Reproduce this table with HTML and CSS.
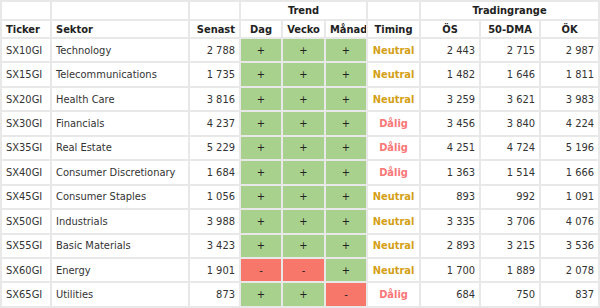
FILE: index.html
```html
<!DOCTYPE html>
<html>
<head>
<meta charset="utf-8">
<link rel="stylesheet" href="styles.css">
</head>
<body>
<table class="grid">
<colgroup>
<col class="c-ticker"><col class="c-sektor"><col class="c-senast"><col class="c-dag"><col class="c-vecko"><col class="c-manad"><col class="c-timing"><col class="c-os"><col class="c-dma"><col class="c-ok">
</colgroup>
<thead>
<tr class="h1"><th></th><th></th><th></th><th colspan="3" class="ctr">Trend</th><th></th><th colspan="3" class="ctr">Tradingrange</th></tr>
<tr class="h2"><th class="left">Ticker</th><th class="left">Sektor</th><th class="right">Senast</th><th class="ctr">Dag</th><th class="ctr">Vecko</th><th class="ctr">Månad</th><th class="ctr">Timing</th><th class="ctr">ÖS</th><th class="ctr">50-DMA</th><th class="ctr">ÖK</th></tr>
</thead>
<tbody>
<tr><td>SX10GI</td><td>Technology</td><td class="num">2 788</td><td class="up">+</td><td class="up">+</td><td class="up">+</td><td class="neutral">Neutral</td><td class="num">2 443</td><td class="num">2 715</td><td class="num">2 987</td></tr>
<tr><td>SX15GI</td><td>Telecommunications</td><td class="num">1 735</td><td class="up">+</td><td class="up">+</td><td class="up">+</td><td class="neutral">Neutral</td><td class="num">1 482</td><td class="num">1 646</td><td class="num">1 811</td></tr>
<tr><td>SX20GI</td><td>Health Care</td><td class="num">3 816</td><td class="up">+</td><td class="up">+</td><td class="up">+</td><td class="neutral">Neutral</td><td class="num">3 259</td><td class="num">3 621</td><td class="num">3 983</td></tr>
<tr><td>SX30GI</td><td>Financials</td><td class="num">4 237</td><td class="up">+</td><td class="up">+</td><td class="up">+</td><td class="bad">Dålig</td><td class="num">3 456</td><td class="num">3 840</td><td class="num">4 224</td></tr>
<tr><td>SX35GI</td><td>Real Estate</td><td class="num">5 229</td><td class="up">+</td><td class="up">+</td><td class="up">+</td><td class="bad">Dålig</td><td class="num">4 251</td><td class="num">4 724</td><td class="num">5 196</td></tr>
<tr><td>SX40GI</td><td>Consumer Discretionary</td><td class="num">1 684</td><td class="up">+</td><td class="up">+</td><td class="up">+</td><td class="bad">Dålig</td><td class="num">1 363</td><td class="num">1 514</td><td class="num">1 666</td></tr>
<tr><td>SX45GI</td><td>Consumer Staples</td><td class="num">1 056</td><td class="up">+</td><td class="up">+</td><td class="up">+</td><td class="neutral">Neutral</td><td class="num">893</td><td class="num">992</td><td class="num">1 091</td></tr>
<tr><td>SX50GI</td><td>Industrials</td><td class="num">3 988</td><td class="up">+</td><td class="up">+</td><td class="up">+</td><td class="neutral">Neutral</td><td class="num">3 335</td><td class="num">3 706</td><td class="num">4 076</td></tr>
<tr><td>SX55GI</td><td>Basic Materials</td><td class="num">3 423</td><td class="up">+</td><td class="up">+</td><td class="up">+</td><td class="neutral">Neutral</td><td class="num">2 893</td><td class="num">3 215</td><td class="num">3 536</td></tr>
<tr><td>SX60GI</td><td>Energy</td><td class="num">1 901</td><td class="down">-</td><td class="down">-</td><td class="up">+</td><td class="neutral">Neutral</td><td class="num">1 700</td><td class="num">1 889</td><td class="num">2 078</td></tr>
<tr><td>SX65GI</td><td>Utilities</td><td class="num">873</td><td class="up">+</td><td class="up">+</td><td class="down">-</td><td class="bad">Dålig</td><td class="num">684</td><td class="num">750</td><td class="num">837</td></tr>
</tbody>
</table>
</body>
</html>
```

FILE: styles.css
```css
html, body {
  margin: 0;
  padding: 0;
  background: #ffffff;
}
.grid {
  border-collapse: collapse;
  table-layout: fixed;
  width: 599px;
  font-family: "DejaVu Sans Condensed", "DejaVu Sans", Verdana, sans-serif;
  font-size: 11px;
  color: #333333;
}
.c-ticker { width: 50px; }
.c-sektor { width: 138px; }
.c-senast { width: 51px; }
.c-dag { width: 42px; }
.c-vecko { width: 43px; }
.c-manad { width: 42px; }
.c-timing { width: 53px; }
.c-os { width: 60px; }
.c-dma { width: 60px; }
.c-ok { width: 59px; }
.grid th, .grid td {
  border: 2px solid #e8e8e8;
  padding: 0 4px;
  white-space: nowrap;
  overflow: hidden;
}
.grid th {
  font-weight: bold;
  color: #222222;
}
.h1 th { height: 17px; }
.h2 th { height: 16px; }
.grid td { height: 22.45px; }
.left { text-align: left; }
.right { text-align: right; }
.ctr { text-align: center; }
.num { text-align: right; }
.up, .down { text-align: center; color: #222222; }
.up { background: #a9d18e; }
.down { background: #f8776b; }
.neutral, .bad { text-align: center; font-weight: bold; }
.neutral { color: #d4a017; }
.bad { color: #f87878; }
```
